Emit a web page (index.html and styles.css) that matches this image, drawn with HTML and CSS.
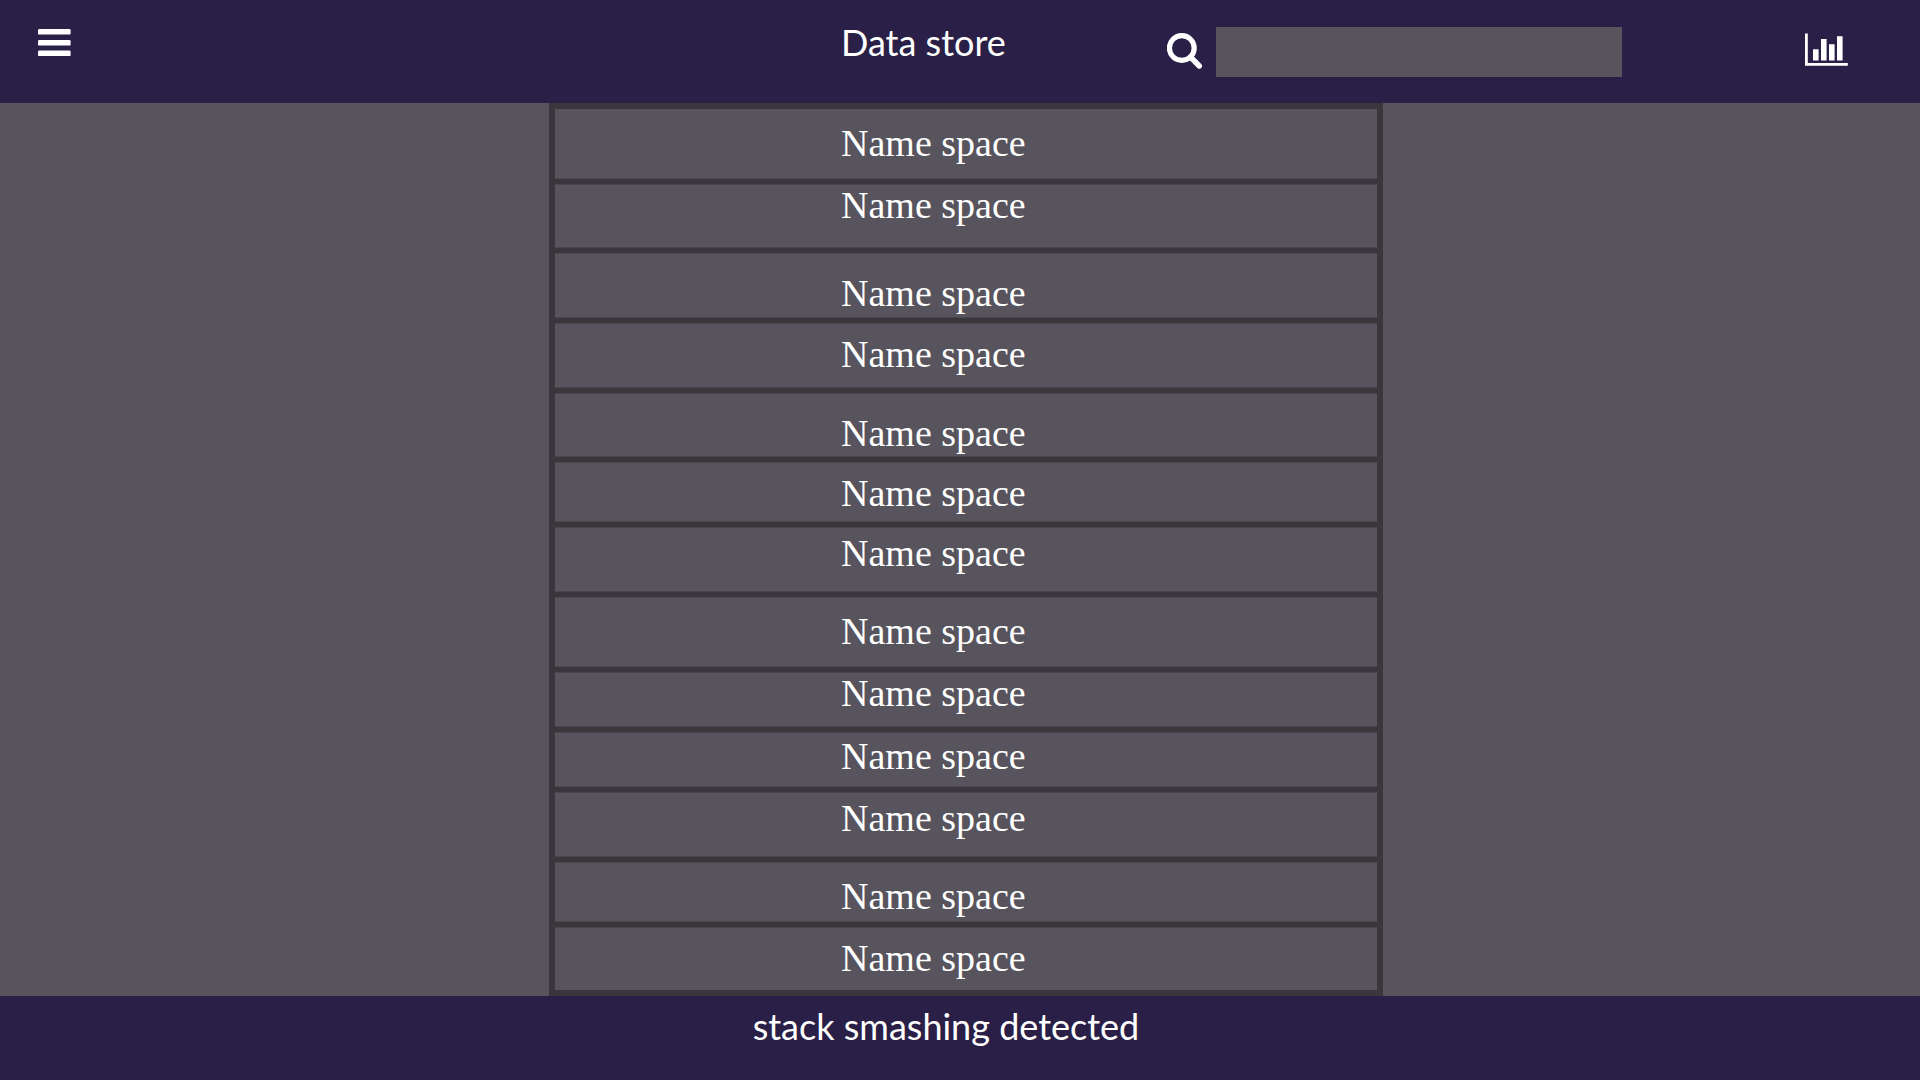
FILE: index.html
```html
<!DOCTYPE html>
<html lang="en">
<head>
<meta charset="utf-8">
<meta name="viewport" content="width=device-width, initial-scale=1">
<title>Data store</title>
<link rel="stylesheet" href="styles.css">
</head>
<body>
<header class="topbar">
  <button class="icon-button menu" type="button" aria-label="Menu">
    <svg width="34" height="28" viewBox="0 0 34 28" fill="#fff"><rect y="0" width="32.6" height="5.6" rx="1.2"/><rect y="11" width="32.6" height="5.6" rx="1.2"/><rect y="21.5" width="32.6" height="5.6" rx="1.2"/></svg>
  </button>
  <h1 class="title">Data store</h1>
  <form class="search" role="search">
    <label class="search-label" for="query" aria-label="Search">
      <svg width="36" height="36" viewBox="0 0 36 36" fill="none" stroke="#fff"><circle cx="14.8" cy="15" r="12.4" stroke-width="5.2"/><path d="M23.5 24l8.8 9" stroke-width="5.4" stroke-linecap="round"/></svg>
    </label>
    <input class="search-input" id="query" type="text">
  </form>
  <button class="icon-button stats" type="button" aria-label="Statistics">
    <svg width="43" height="33" viewBox="0 0 43 33" fill="#fff"><path d="M0 0.4h2.8v29.6H42.8v2.7H0zM8 16.3h5.6v11.2H8zM16 6h5.6v21.5H16zM24 11.2h5.6v16.3H24zM32 3.2h5.6v24.3H32z"/></svg>
  </button>
</header>
<main class="content">
  <ul class="spaces">
    <li class="space h70 t13">Name space</li>
    <li class="space h64 t0">Name space</li>
    <li class="space h65 t19">Name space</li>
    <li class="space h65 t10">Name space</li>
    <li class="space h64 t19">Name space</li>
    <li class="space h60 t10">Name space</li>
    <li class="space h65 t5">Name space</li>
    <li class="space h70 t13">Name space</li>
    <li class="space h55 t0">Name space</li>
    <li class="space h55 t3">Name space</li>
    <li class="space h65 t5">Name space</li>
    <li class="space h60 t13">Name space</li>
    <li class="space h60 t10">Name space</li>
  </ul>
</main>
<footer class="statusbar">stack smashing detected</footer>
</body>
</html>
```
FILE: styles.css
```css
* {
  box-sizing: border-box;
}

body {
  display: flex;
  flex-direction: column;
  min-height: 100vh;
  margin: 0;
  background: #57545e;
  color: #fff;
  font: 36px/44px Lato, sans-serif;
}

/* Top bar */
.topbar {
  display: grid;
  grid-template-columns: minmax(0, 841fr) minmax(0, 326fr) minmax(0, 638fr) minmax(0, 115fr);
  align-items: start;
  min-height: 103px;
  background: #2a1f46;
}

.icon-button {
  justify-self: start;
  padding: 0;
  border: 0;
  background: none;
  cursor: pointer;
}

.icon-button svg,
.search-label svg {
  display: block;
}

.menu {
  margin: 29px 0 0 38px;
}

.stats {
  margin-top: 33px;
}

.title {
  margin: 20px 0 0;
  font: inherit;
  white-space: nowrap;
}

.search {
  display: flex;
  gap: 13px;
  margin: 27px 0 0;
  padding-right: 183px;
}

.search-label {
  flex: none;
  padding-top: 6px;
}

.search-input {
  flex: 1;
  min-width: 0;
  height: 50px;
  padding: 0 12px;
  border: 0;
  border-radius: 0;
  background: #57545e;
  color: #fff;
  font: inherit;
}

/* List of name spaces */
.content {
  display: grid;
  flex: 1;
  grid-template-columns: 549fr 834fr 537fr;
}

.spaces {
  display: flex;
  grid-column: 2;
  flex-direction: column;
  gap: 5px;
  margin: 0;
  padding: 6px;
  background: #39373c;
  list-style: none;
}

.space {
  padding-left: 34.8%;
  border: solid #49464e;
  border-width: 1px 0;
  background: #57545e;
  font: 38px/40px "Liberation Serif", serif;
}

.space:first-child {
  border-top-color: #57545e;
}

.space:last-child {
  flex: 1;
  border-bottom-color: #57545e;
}

.h55 { min-height: 55px; }
.h60 { min-height: 60px; }
.h64 { min-height: 64px; }
.h65 { min-height: 65px; }
.h70 { min-height: 70px; }

.t0 { padding-top: 0; }
.t3 { padding-top: 3px; }
.t5 { padding-top: 5px; }
.t10 { padding-top: 10px; }
.t13 { padding-top: 13px; }
.t19 { padding-top: 19px; }

/* Status bar */
.statusbar {
  min-height: 84px;
  padding: 8px 0 0 39.2%;
  background: #2a1f46;
}
```
